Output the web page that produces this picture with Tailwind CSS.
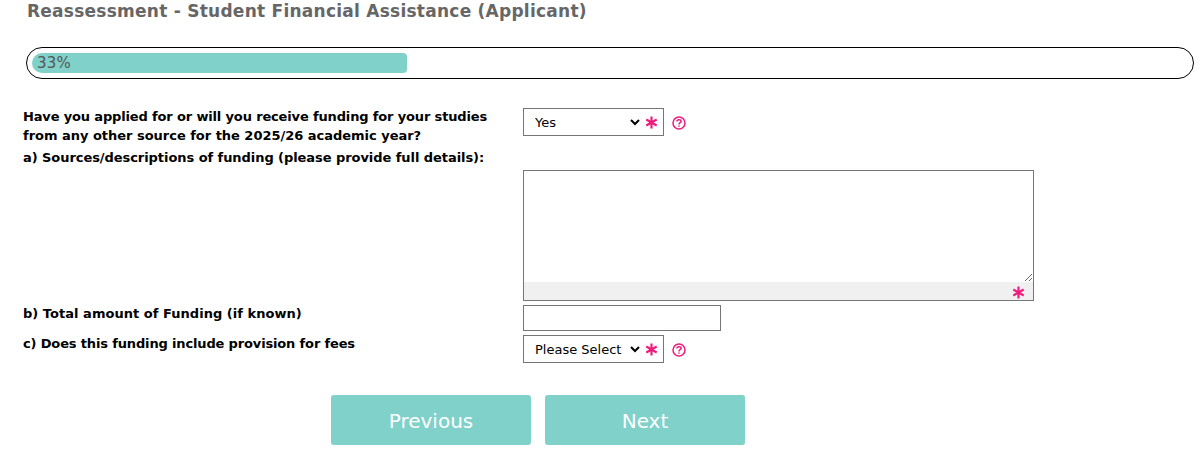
<!DOCTYPE html>
<html lang="en">
<head>
    <meta charset="UTF-8">
    <title>Reassessment - Student Financial Assistance (Applicant)</title>
    <script src="https://cdn.jsdelivr.net/npm/@tailwindcss/browser@4"></script>
</head>
<body class="bg-white h-[450px] overflow-hidden font-['DejaVu_Sans',Verdana,sans-serif] text-[13px] text-black">

    <!-- Page title -->
    <h1 class="pl-[27px] pt-[1px] text-[17px] leading-5 font-bold text-[#666666] tracking-[0.25px]">Reassessment - Student Financial Assistance (Applicant)</h1>

    <!-- Progress bar -->
    <div class="mt-[26px] ml-[26px] w-[1168px] h-8 border border-black rounded-2xl p-[5px]">
        <div class="w-[375px] h-5 bg-[#7fd1ca] rounded-[4px] rounded-l-[10px] pl-[5px] text-[15px] leading-5 text-[#555555] tracking-[0.2px]">33%</div>
    </div>

    <form class="mt-[29px] pl-[23px]">
        <!-- Other funding -->
        <div class="flex">
            <label class="w-[500px] font-bold leading-[19px] -mt-[1px]"><span class="tracking-[-0.15px]">Have you applied for or will you receive funding for your studies</span><br><span class="tracking-[-0.02px]">from any other source for the 2025/26 academic year?</span></label>
            <div class="flex items-center h-[28px]">
                <div class="flex items-center w-[141px] h-[28px] border border-[#767676] pl-[7px] pr-1">
                    <select class="w-[112px] text-[13px] appearance-auto outline-none bg-white">
                        <option>Yes</option>
                        <option>No</option>
                    </select>
                    <svg class="w-[13px] h-[13px] ml-[2px]" viewBox="0 0 12 12" stroke="#ec1b7c" stroke-width="2" fill="none"><path d="M6 0.5V11.5M1.2 3.2L10.8 8.8M10.8 3.2L1.2 8.8"/></svg>
                </div>
                <svg class="w-[14px] h-[14px] ml-[8px] mt-[2px]" viewBox="0 0 14 14" fill="none" stroke="#ec1b7c" stroke-width="1.5"><circle cx="7" cy="7" r="6"/><path d="M4.9 5.6C4.9 4.4 5.8 3.7 7 3.7C8.2 3.7 9.1 4.4 9.1 5.4C9.1 6.7 7 6.8 7 8.4"/><path d="M7 9.4V10.8"/></svg>
            </div>
        </div>

        <!-- a) Sources -->
        <label class="block font-bold leading-[19px] mt-[3px] tracking-[-0.06px]">a) Sources/descriptions of funding (please provide full details):</label>
        <div class="ml-[500px] mt-[3px] w-[511px] h-[131px] border border-[#767676] flex flex-col">
            <textarea class="flex-1 w-full block outline-none resize-y"></textarea>
            <div class="h-[18px] bg-[#f0f0f0] flex justify-end items-center pr-[8px]">
                <svg class="w-[13px] h-[13px] mt-[3px]" viewBox="0 0 12 12" stroke="#ec1b7c" stroke-width="2" fill="none"><path d="M6 0.5V11.5M1.2 3.2L10.8 8.8M10.8 3.2L1.2 8.8"/></svg>
            </div>
        </div>

        <!-- b) Total -->
        <div class="flex mt-1 items-start">
            <label class="w-[500px] font-bold leading-[19px] -mt-[1px] tracking-[0.03px]">b) Total amount of Funding (if known)</label>
            <input type="text" class="w-[198px] h-[26px] border border-[#767676] outline-none">
        </div>

        <!-- c) Fees -->
        <div class="flex mt-[4px]">
            <label class="w-[500px] font-bold leading-[19px] -mt-[1px] tracking-[-0.15px]">c) Does this funding include provision for fees</label>
            <div class="flex items-center h-[28px]">
                <div class="flex items-center w-[141px] h-[28px] border border-[#767676] pl-[7px] pr-1">
                    <select class="w-[112px] text-[13px] appearance-auto outline-none bg-white">
                        <option>Please Select</option>
                        <option>Yes</option>
                        <option>No</option>
                    </select>
                    <svg class="w-[13px] h-[13px] ml-[2px]" viewBox="0 0 12 12" stroke="#ec1b7c" stroke-width="2" fill="none"><path d="M6 0.5V11.5M1.2 3.2L10.8 8.8M10.8 3.2L1.2 8.8"/></svg>
                </div>
                <svg class="w-[14px] h-[14px] ml-[8px] mt-[2px]" viewBox="0 0 14 14" fill="none" stroke="#ec1b7c" stroke-width="1.5"><circle cx="7" cy="7" r="6"/><path d="M4.9 5.6C4.9 4.4 5.8 3.7 7 3.7C8.2 3.7 9.1 4.4 9.1 5.4C9.1 6.7 7 6.8 7 8.4"/><path d="M7 9.4V10.8"/></svg>
            </div>
        </div>

        <!-- Buttons -->
        <div class="flex gap-[14px] ml-[308px] mt-8">
            <button type="button" class="w-[200px] h-[50px] pt-[1px] bg-[#7fd1ca] rounded-[3px] text-white text-xl">Previous</button>
            <button type="button" class="w-[200px] h-[50px] pt-[1px] bg-[#7fd1ca] rounded-[3px] text-white text-xl">Next</button>
        </div>
    </form>

</body>
</html>
